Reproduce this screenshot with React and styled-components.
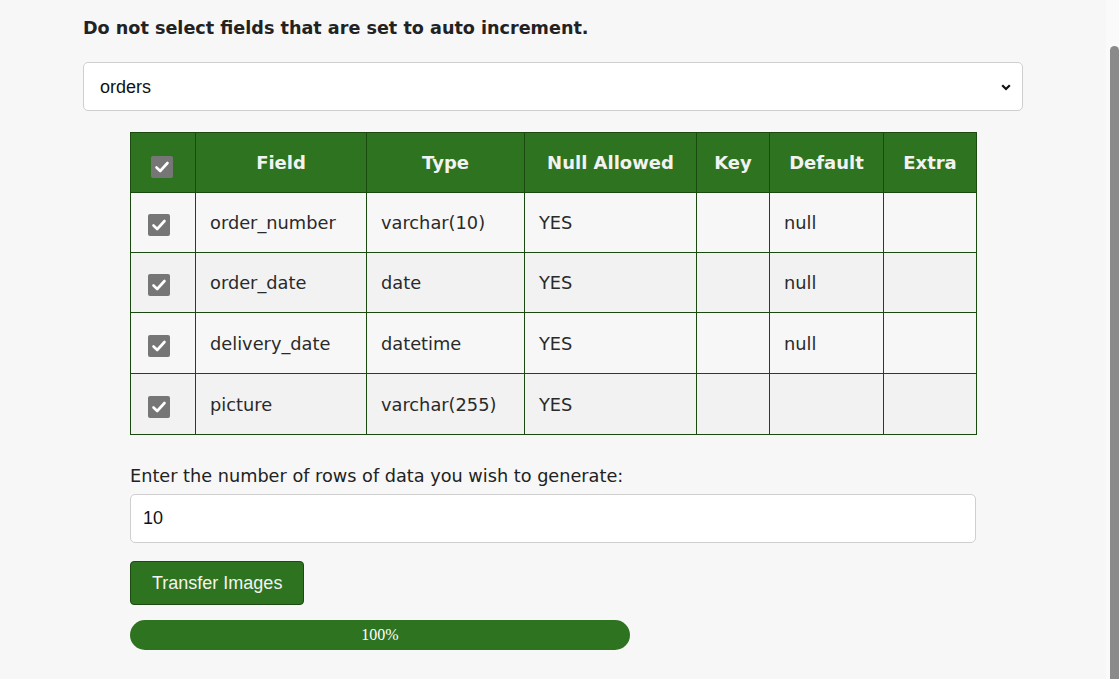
import React from "react";
import styled, { createGlobalStyle } from "styled-components";

const Global = createGlobalStyle`
  html, body { margin: 0; padding: 0; height: 100%; overflow: hidden; }
  body { background: #f7f7f7; font-family: "DejaVu Sans", Verdana, sans-serif; color: #222; }
`;

const Page = styled.div`
  display: flex;
  height: 100vh;
`;

const Main = styled.main`
  flex: 1;
  min-width: 0;
`;

const ScrollTrack = styled.div`
  position: relative;
  width: 13px;
  flex: none;
  background: #fafafa;
`;

const ScrollThumb = styled.div`
  position: absolute;
  right: 0;
  top: 46px;
  bottom: 0;
  width: 9px;
  background: #8a8a8a;
  border-radius: 5px 5px 0 0;
`;

const Container = styled.div`
  width: 940px;
  margin: 0 auto;
  padding-top: 17px;
`;

const Heading = styled.h3`
  margin: 0 0 23px;
  font-size: 17.6px;
  line-height: 22px;
  font-weight: bold;
  color: #222;
`;

const SelectWrap = styled.div`
  position: relative;
  margin-bottom: 21px;
`;

const Select = styled.select`
  appearance: none;
  display: block;
  width: 100%;
  height: 49px;
  box-sizing: border-box;
  padding: 0 16px;
  border: 1px solid #cfcfcf;
  border-radius: 5px;
  background: #fff;
  font-family: "Liberation Sans", Arial, sans-serif;
  font-size: 18px;
  color: #111;
`;

const Chevron = styled.svg`
  position: absolute;
  right: 12px;
  top: 22px;
  pointer-events: none;
`;

const Section = styled.div`
  width: 90%;
  margin: 0 auto;
`;

const Table = styled.table`
  width: 100%;
  border-collapse: collapse;
  table-layout: fixed;
  font-size: 17.8px;
  color: #2a2a2a;
`;

const Th = styled.th`
  background: #2e731f;
  color: #f2f2f2;
  font-size: 18px;
  font-weight: bold;
  height: 60px;
  border: 1px solid #1b4a10;
  text-align: center;
  padding: 0;
  box-sizing: border-box;
`;

const Tr = styled.tr`
  background: ${(p) => (p.$alt ? "#f2f2f2" : "#f7f7f7")};
`;

const Td = styled.td`
  height: ${(p) => p.$h || 60}px;
  border: 1px solid #1b4a10;
  padding: 0 14px;
  box-sizing: border-box;
`;

const CheckCell = styled(Td)`
  padding: 4px 0 0 17px;
`;

const HeadCheckCell = styled(Th)`
  text-align: left;
  padding: 8px 0 0 20px;
`;

const Box = styled.span`
  display: inline-flex;
  align-items: center;
  justify-content: center;
  width: 22px;
  height: 22px;
  border-radius: 2px;
  background: #767676;
  vertical-align: middle;
`;

const Label = styled.div`
  margin-top: 30px;
  font-size: 17.7px;
  line-height: 22px;
  color: #222;
`;

const Input = styled.input`
  display: block;
  width: 100%;
  box-sizing: border-box;
  height: 49px;
  margin-top: 7px;
  padding: 0 12px;
  border: 1px solid #cfcfcf;
  border-radius: 5px;
  background: #fff;
  font-family: "Liberation Sans", Arial, sans-serif;
  font-size: 18px;
  color: #111;
  outline: none;
`;

const Button = styled.button`
  display: block;
  margin-top: 18px;
  height: 44px;
  padding: 0 21px;
  border: 1px solid #1d4a12;
  border-radius: 4px;
  background: #2e731f;
  color: #f4f4f4;
  font-family: "Liberation Sans", Arial, sans-serif;
  font-size: 18px;
  cursor: pointer;
`;

const Progress = styled.div`
  margin-top: 15px;
  width: 500px;
  height: 30px;
  border-radius: 15px;
  background: #e6e6e6;
  overflow: hidden;
`;

const Bar = styled.div`
  height: 100%;
  background: #2e731f;
  color: #fff;
  display: flex;
  align-items: center;
  justify-content: center;
  font-family: "Liberation Serif", "Times New Roman", serif;
  font-size: 16px;
`;

const Check = () => (
  <Box>
    <svg width="16" height="16" viewBox="0 0 16 16">
      <path d="M2.5 8.5 L6.2 12 L13.5 4" fill="none" stroke="#fff" strokeWidth="2.6" strokeLinecap="round" strokeLinejoin="round" />
    </svg>
  </Box>
);

const rows = [
  { field: "order_number", type: "varchar(10)", nul: "YES", key: "", def: "null", extra: "", h: 60 },
  { field: "order_date", type: "date", nul: "YES", key: "", def: "null", extra: "", h: 60 },
  { field: "delivery_date", type: "datetime", nul: "YES", key: "", def: "null", extra: "", h: 61 },
  { field: "picture", type: "varchar(255)", nul: "YES", key: "", def: "", extra: "", h: 61 },
];

const widths = [65, 171, 158, 172, 73, 114, 93];

export default function App() {
  const progress = 100;
  return (
    <>
      <Global />
      <Page>
        <Main>
          <Container>
            <Heading>Do not select fields that are set to auto increment.</Heading>
            <SelectWrap>
              <Select defaultValue="orders">
                <option value="orders">orders</option>
              </Select>
              <Chevron width="10" height="7" viewBox="0 0 10 7">
                <path d="M1.2 1.2 L5 5 L8.8 1.2" fill="none" stroke="#111" strokeWidth="2.2" />
              </Chevron>
            </SelectWrap>
            <Section>
              <Table>
                <colgroup>
                  {widths.map((w, i) => (
                    <col key={i} style={{ width: w }} />
                  ))}
                </colgroup>
                <thead>
                  <tr>
                    <HeadCheckCell><Check /></HeadCheckCell>
                    <Th>Field</Th>
                    <Th>Type</Th>
                    <Th>Null Allowed</Th>
                    <Th>Key</Th>
                    <Th>Default</Th>
                    <Th>Extra</Th>
                  </tr>
                </thead>
                <tbody>
                  {rows.map((r, i) => (
                    <Tr key={r.field} $alt={i % 2 === 1}>
                      <CheckCell $h={r.h}><Check /></CheckCell>
                      <Td $h={r.h}>{r.field}</Td>
                      <Td $h={r.h}>{r.type}</Td>
                      <Td $h={r.h}>{r.nul}</Td>
                      <Td $h={r.h}>{r.key}</Td>
                      <Td $h={r.h}>{r.def}</Td>
                      <Td $h={r.h}>{r.extra}</Td>
                    </Tr>
                  ))}
                </tbody>
              </Table>
              <Label>Enter the number of rows of data you wish to generate:</Label>
              <Input type="number" defaultValue="10" />
              <Button>Transfer Images</Button>
              <Progress>
                <Bar style={{ width: `${progress}%` }}>{progress}%</Bar>
              </Progress>
            </Section>
          </Container>
        </Main>
        <ScrollTrack>
          <ScrollThumb />
        </ScrollTrack>
      </Page>
    </>
  );
}
